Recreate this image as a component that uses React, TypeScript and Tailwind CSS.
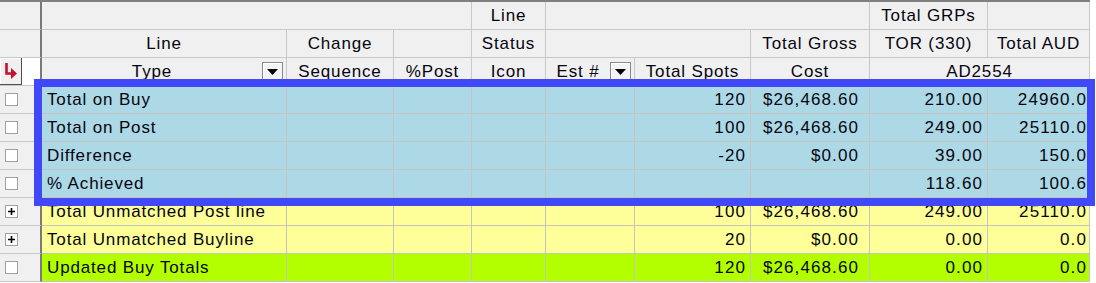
import React from "react";

const cols =
  "grid grid-cols-[42px_245px_107px_78px_74px_89px_116px_119px_118px_102px]";

const font = { fontFamily: '"Liberation Sans", Arial, sans-serif' };

interface RowData {
  label: string;
  spots: string;
  cost: string;
  tor: string;
  aud: string;
  bg: string;
  plus?: boolean;
}

const rows: RowData[] = [
  { label: "Total on Buy", spots: "120", cost: "$26,468.60", tor: "210.00", aud: "24960.0", bg: "bg-[#add8e6]" },
  { label: "Total on Post", spots: "100", cost: "$26,468.60", tor: "249.00", aud: "25110.0", bg: "bg-[#add8e6]" },
  { label: "Difference", spots: "-20", cost: "$0.00", tor: "39.00", aud: "150.0", bg: "bg-[#add8e6]" },
  { label: "% Achieved", spots: "", cost: "", tor: "118.60", aud: "100.6", bg: "bg-[#add8e6]" },
  { label: "Total Unmatched Post line", spots: "100", cost: "$26,468.60", tor: "249.00", aud: "25110.0", bg: "bg-[#ffff99]", plus: true },
  { label: "Total Unmatched Buyline", spots: "20", cost: "$0.00", tor: "0.00", aud: "0.0", bg: "bg-[#ffff99]", plus: true },
  { label: "Updated Buy Totals", spots: "120", cost: "$26,468.60", tor: "0.00", aud: "0.0", bg: "bg-[#b3ff00]" },
];

const Gutter: React.FC<{ children?: React.ReactNode }> = ({ children }) => (
  <div className="h-[28px] flex items-center bg-[#f0f0f0] border-b border-[#c8c8c8] border-r-2 border-r-[#7a7a7a]">
    {children}
  </div>
);

const Head: React.FC<{ text?: string; span?: string }> = ({ text, span = "" }) => (
  <div className={`h-[28px] flex items-center justify-center bg-[#f0f0f0] border-r border-b border-[#c8c8c8] ${span}`}>
    {text}
  </div>
);

const DropBtn = () => (
  <div className="w-[21px] h-[20px] mr-[3px] flex items-center justify-center border border-[#8a8a8a] bg-[#f4f4f4] shadow-[inset_1px_1px_0_#ffffff]">
    <svg width="11" height="6" viewBox="0 0 11 6">
      <path d="M0 0 H11 L5.5 6 Z" fill="#000" />
    </svg>
  </div>
);

const Box: React.FC<{ plus?: boolean }> = ({ plus }) => (
  <div className="ml-[5px] w-[13px] h-[13px] border border-[#a0a0a0] bg-white flex items-center justify-center">
    {plus && (
      <svg width="9" height="9" viewBox="0 0 9 9">
        <path d="M1 4.5 H8 M4.5 1 V8" stroke="#000" strokeWidth="1.6" />
      </svg>
    )}
  </div>
);

const Cell: React.FC<{ text?: string; bg: string; left?: boolean; pad?: string }> = ({
  text,
  bg,
  left,
  pad = "pr-[4px]",
}) => (
  <div
    className={`h-[28px] flex items-center border-r border-b border-[#c4c4c4] ${bg} ${
      left ? "justify-start pl-[5px]" : `justify-end tracking-[1.1px] ${pad}`
    }`}
  >
    {text}
  </div>
);

export default function App() {
  return (
    <div
      className="relative w-[1096px] h-[283px] bg-white overflow-hidden text-[17px] tracking-[0.85px] text-[#05050f] leading-none"
      style={font}
    >
      <div className="w-[1090px] border-t-2 border-[#808080]">
        {/* header row 1 */}
        <div className={cols}>
          <Gutter />
          <Head span="col-span-3" />
          <Head text="Line" />
          <Head span="col-span-3" />
          <Head text="Total GRPs" />
          <Head />
        </div>
        {/* header row 2 */}
        <div className={cols}>
          <Gutter />
          <Head text="Line" />
          <Head text="Change" />
          <Head />
          <Head text="Status" />
          <Head span="col-span-2" />
          <Head text="Total Gross" />
          <Head text="TOR (330)" />
          <Head text="Total AUD" />
        </div>
        {/* header row 3 */}
        <div className={cols}>
          <div className="h-[28px] flex border-b border-[#c8c8c8] border-r-2 border-r-[#7a7a7a]">
            <div className="w-[22px] h-full flex items-center justify-center bg-[#f0f0f0] border-r border-b border-[#505050] shadow-[inset_1px_1px_0_#ffffff]">
              <svg width="15" height="20" viewBox="0 0 15 20">
                <path d="M3.5 2 V12.5 H9" stroke="#c8102e" strokeWidth="2.6" fill="none" />
                <path d="M8 7 L14 12.5 L8 18 Z" fill="#c8102e" />
              </svg>
            </div>
            <div className="flex-1 bg-white" />
          </div>
          <div className="h-[28px] flex items-center bg-[#f0f0f0] border-r border-b border-[#c8c8c8]">
            <span className="flex-1 text-center">Type</span>
            <DropBtn />
          </div>
          <Head text="Sequence" />
          <Head text="%Post" />
          <Head text="Icon" />
          <div className="h-[28px] flex items-center bg-[#f0f0f0] border-r border-b border-[#c8c8c8]">
            <span className="flex-1 text-center">Est #</span>
            <DropBtn />
          </div>
          <Head text="Total Spots" />
          <Head text="Cost" />
          <Head text="AD2554" span="col-span-2" />
        </div>
        {/* data rows */}
        {rows.map((r) => (
          <div key={r.label} className={cols}>
            <Gutter>
              <Box plus={r.plus} />
            </Gutter>
            <Cell text={r.label} bg={r.bg} left />
            <Cell bg={r.bg} />
            <Cell bg={r.bg} />
            <Cell bg={r.bg} />
            <Cell bg={r.bg} />
            <Cell text={r.spots} bg={r.bg} />
            <Cell text={r.cost} bg={r.bg} pad="pr-[10px]" />
            <Cell text={r.tor} bg={r.bg} />
            <Cell text={r.aud} bg={r.bg} pad="pr-[2px]" />
          </div>
        ))}
      </div>
      {/* highlight frame */}
      <div className="absolute left-[34px] top-[79px] w-[1061px] h-[127px] border-[8px] border-[#4048f8] pointer-events-none" />
    </div>
  );
}
